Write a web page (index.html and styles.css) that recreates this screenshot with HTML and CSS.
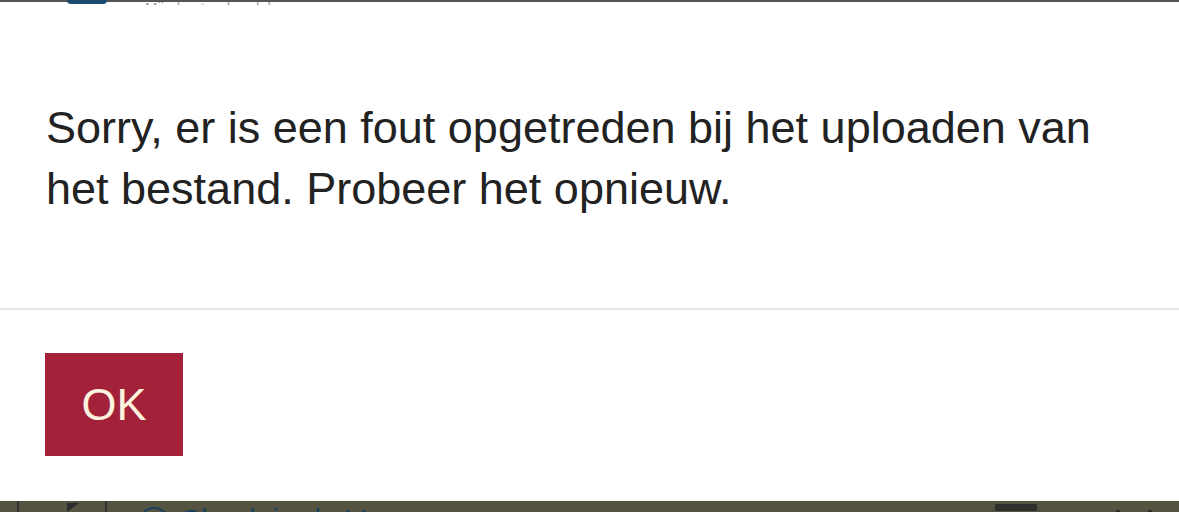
FILE: index.html
```html
<!DOCTYPE html>
<html lang="nl">
<head>
    <meta charset="UTF-8">
    <meta name="viewport" content="width=device-width, initial-scale=1.0">
    <title>Upload mislukt</title>
    <link rel="stylesheet" href="styles.css">
</head>
<body>
    <div class="backdrop-top">
        <span class="logo-dot"></span>
        <span class="top-text">Mijn bestanden delen</span>
    </div>

    <div class="modal">
        <div class="modal-body">
            <p>Sorry, er is een fout opgetreden bij het uploaden van het bestand. Probeer het opnieuw.</p>
        </div>
        <div class="modal-footer">
            <button class="btn-ok">OK</button>
        </div>
    </div>

    <div class="backdrop-bottom">
        <span class="bar-line"></span>
        <span class="bar-arrow"></span>
        <span class="bar-line"></span>
        <span class="bar-link">&#9711; Check in de V</span>
        <span class="bar-spacer"></span>
        <span class="bar-block"></span>
        <span class="bar-dot"></span>
        <span class="bar-dot"></span>
    </div>
</body>
</html>
```

FILE: styles.css
```css
html, body {
    margin: 0;
    height: 512px;
    overflow: hidden;
    background: #ffffff;
    font-family: "Liberation Sans", Arial, Helvetica, sans-serif;
}

.backdrop-top {
    height: 2px;
    background: #555555;
    display: flex;
    align-items: flex-start;
    gap: 38px;
    padding-left: 67px;
    position: relative;
}
.logo-dot {
    width: 40px;
    height: 4px;
    background: #1d4a73;
    border-radius: 0 0 20px 20px;
}
.top-text {
    font-size: 15px;
    line-height: 15px;
    height: 5px;
    overflow: hidden;
    margin-top: -10px;
    padding-top: 10px;
    color: #222222;
    opacity: 0.45;
    white-space: nowrap;
}

.modal {
    height: 499px;
    display: flex;
    flex-direction: column;
    background: #ffffff;
}
.modal-body {
    padding: 95px 46px 0 46px;
    height: 211px;
    border-bottom: 2px solid #e6e6e6;
}
.modal-body p {
    margin: 0;
    font-size: 45px;
    line-height: 61px;
    color: #222222;
}
.modal-footer {
    padding: 43px 45px 0 45px;
}
.btn-ok {
    width: 138px;
    height: 103px;
    border: none;
    border-radius: 0;
    background: #a3223a;
    color: #fdf2de;
    font-family: "Liberation Sans", Arial, Helvetica, sans-serif;
    font-size: 45px;
    padding: 0;
    cursor: pointer;
}

.backdrop-bottom {
    height: 11px;
    background: #545342;
    display: flex;
    align-items: flex-start;
    overflow: hidden;
    padding-left: 17px;
}
.bar-line {
    width: 2px;
    height: 11px;
    background: #333333;
}
.bar-arrow {
    width: 0;
    height: 0;
    margin: 2px 26px 0 48px;
    border-left: 12px solid #2c2c2c;
    border-bottom: 9px solid transparent;
}
.bar-link {
    margin-left: 30px;
    padding-top: 4px;
    font-size: 30px;
    line-height: 30px;
    color: #17405f;
    white-space: nowrap;
}
.bar-spacer {
    flex: 1;
}
.bar-block {
    width: 42px;
    height: 7px;
    margin-top: 3px;
    margin-right: 78px;
    background: #2f2f2f;
    border-radius: 1px;
}
.bar-dot {
    width: 6px;
    height: 6px;
    margin-top: 9px;
    margin-right: 26px;
    border-radius: 50%;
    background: #2a2a2a;
}
```
